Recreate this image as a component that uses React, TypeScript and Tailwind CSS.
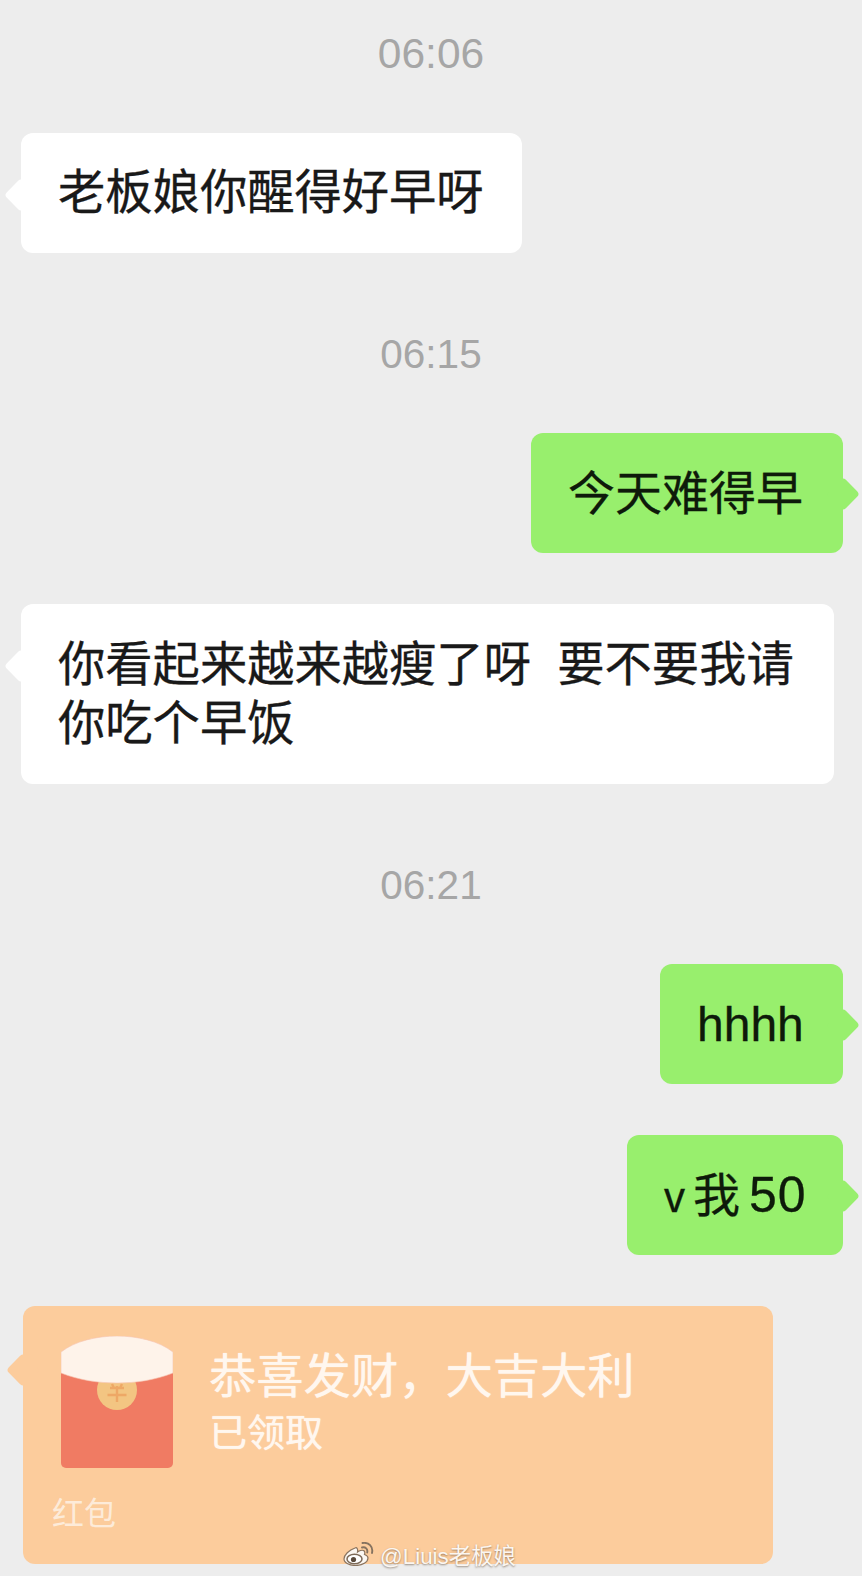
import React from "react";

const font = { fontFamily: '"Liberation Sans", "Noto Sans CJK SC", sans-serif' };

function Time({ t, className }: { t: string; className: string }) {
  return (
    <div className={`text-center leading-[44px] text-[#a6a6a6] ${className}`}>{t}</div>
  );
}

function Tail({ color, side, top }: { color: string; side: string; top: string }) {
  return <div className={`absolute h-[24px] w-[24px] rotate-45 rounded-[4px] ${color} ${side} ${top}`} />;
}

function Received({ children, className }: { children: React.ReactNode; className: string }) {
  return (
    <div className={`relative rounded-[12px] bg-white pl-[37px] text-[47.3px] leading-[59px] text-[#191919] [-webkit-text-stroke:0.3px_#191919] ${className}`}>
      <Tail color="bg-white" side="left-[-12px]" top="top-[50px]" />
      <div className="relative">{children}</div>
    </div>
  );
}

function Sent({ children, className }: { children: React.ReactNode; className: string }) {
  return (
    <div className={`relative h-[120px] self-end rounded-[12px] bg-[#98ef6d] pl-[37px] pt-[31px] text-[47px] leading-[59px] text-[#0e1a0a] [-webkit-text-stroke:0.3px_#0e1a0a] ${className}`}>
      <Tail color="bg-[#98ef6d]" side="right-[-12px]" top="top-[49px]" />
      <div className="relative">{children}</div>
    </div>
  );
}

function Packet() {
  return (
    <svg viewBox="0 0 112 132" className="h-[132px] w-[112px] shrink-0">
      <rect x="0" y="20" width="112" height="112" rx="5" fill="#f07b63" />
      <circle cx="56" cy="54" r="20" fill="#f3c582" />
      <path d="M49 52h14M46.500 59h19M56 50v16M51 48l2 4M61 48l-2 4" stroke="#eea866" strokeWidth="2.4" fill="none" />
      <path d="M0 16C14 5 36 0 56 0s42 5 56 16v21c-18 7-37 10-56 10S18 44 0 37Z" fill="#fef3ea" stroke="#f6c4b2" strokeWidth="0.6" />
    </svg>
  );
}

function Weibo() {
  return (
    <svg viewBox="0 0 32 24" className="h-[24px] w-[32px] shrink-0">
      <path d="M12 6C6 8 1 13 1 17c0 4 6 6.500 11.500 6.500C19.500 23.500 25 20 25 16c0-2-2-3-3.500-3.500 1-3-.5-5-4-4-1.500.5-2.500 1-3 1.500.5-3-.5-5-2.500-4Z" fill="#fbf7f2" stroke="#8a735e" strokeWidth="1.2" />
      <ellipse cx="11.500" cy="17" rx="7.500" ry="4.800" fill="#fff" stroke="#7d6a58" strokeWidth="1.500" />
      <circle cx="10.500" cy="17.500" r="2.600" fill="#5a4a3c" />
      <path d="M19 5.500c3.500-.8 6 1.500 5.200 5M19.500 1c6-1 11 3.500 9.500 10" fill="none" stroke="#85725f" strokeWidth="1.900" strokeLinecap="round" />
    </svg>
  );
}

export default function App() {
  return (
    <div style={font} className="relative flex h-[1576px] w-[862px] flex-col overflow-hidden bg-[#ededed]">
      <Time t="06:06" className="mt-[32px] text-[42.500px]" />
      <Received className="ml-[21px] mt-[57px] h-[120px] w-[501px] pt-[30px]">老板娘你醒得好早呀</Received>
      <Time t="06:15" className="mt-[79px] text-[40.500px]" />
      <Sent className="mr-[19px] mt-[57px] w-[312px]">今天难得早</Sent>
      <Received className="ml-[21px] mt-[51px] h-[180px] w-[813px] pt-[31px]">
        <div>你看起来越来越瘦了呀&nbsp;&nbsp;要不要我请</div>
        <div>你吃个早饭</div>
      </Received>
      <Time t="06:21" className="mt-[79px] text-[40.500px]" />
      <Sent className="mr-[19px] mt-[57px] w-[183px]"><span className="text-[48px]">hhhh</span></Sent>
      <Sent className="mr-[19px] mt-[51px] w-[216px]">
        <span className="text-[42px]">v</span>
        <span className="ml-[8px]">我</span>
        <span className="ml-[9px] tracking-[1px] text-[50px]">50</span>
      </Sent>
      <div className="relative ml-[23px] mt-[51px] h-[258px] w-[750px] rounded-[12px] bg-[#fccc9c] pl-[38px] pt-[30px]">
        <Tail color="bg-[#fccc9c]" side="left-[-12px]" top="top-[52px]" />
        <div className="relative flex gap-[36px]">
          <Packet />
          <div className="pt-[11px] text-[#fff7ef] [text-shadow:0_0_1px_#fff7ef]">
            <div className="text-[47.300px] leading-[60px]">恭喜发财，大吉大利</div>
            <div className="mt-[1px] text-[38px] leading-[50px]">已领取</div>
          </div>
        </div>
        <div className="relative -ml-[9px] mt-[26px] text-[32px] leading-[40px] text-[#fdebd9]">红包</div>
      </div>
      <div className="absolute left-[343px] top-[1542px] flex items-start gap-[5px] text-[22.400px] leading-[30px] text-[#fbf6f1] [text-shadow:0_1px_2px_rgba(90,70,50,0.6)]">
        <Weibo />
        <span>@Liuis老板娘</span>
      </div>
    </div>
  );
}
